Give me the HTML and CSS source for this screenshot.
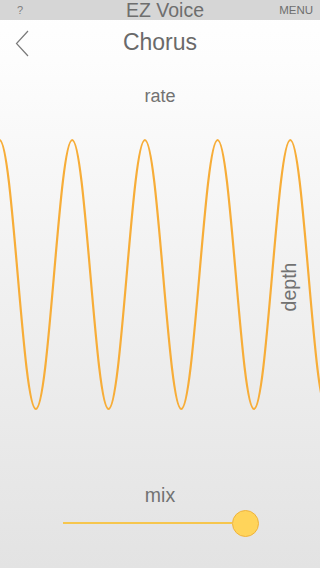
FILE: index.html
```html
<!DOCTYPE html>
<html lang="en">
<head>
<meta charset="utf-8">
<title>EZ Voice - Chorus</title>
<link rel="stylesheet" href="styles.css">
</head>
<body>
<div class="screen">
  <header class="status">
    <span class="help">?</span>
    <span class="app">EZ Voice</span>
    <span class="menu">MENU</span>
  </header>
  <nav class="nav">
    <span class="back">
      <svg width="14" height="27" viewBox="0 0 14 27"><path d="M13 1 L1.5 13.5 L13 26" fill="none" stroke="#7a7a7a" stroke-width="1.2"/></svg>
    </span>
    <h1 class="title">Chorus</h1>
    <span></span>
  </nav>
  <div class="label rate">rate</div>
  <div class="wave">
    <svg class="wave-svg" width="320" height="310" viewBox="0 0 320 310">
      <path fill="none" stroke="#f7ad38" stroke-width="2.2" d="M-0.5,20 c6.58,0 12.25,65.6 18.18,134.5 s11.6,134.5 18.17,134.5 s12.25,-65.6 18.18,-134.5 s11.59,-134.5 18.17,-134.5 s12.25,65.6 18.18,134.5 s11.6,134.5 18.17,134.5 s12.25,-65.6 18.18,-134.5 s11.59,-134.5 18.17,-134.5 s12.25,65.6 18.18,134.5 s11.6,134.5 18.17,134.5 s12.25,-65.6 18.18,-134.5 s11.59,-134.5 18.17,-134.5 s12.25,65.6 18.18,134.5 s11.6,134.5 18.17,134.5 s12.25,-65.6 18.18,-134.5 s11.59,-134.5 18.17,-134.5 s12.25,65.6 18.18,134.5 s11.6,134.5 18.17,134.5"/>
    </svg>
    <div class="depth">depth</div>
  </div>
  <div class="label mix">mix</div>
  <div class="slider">
    <div class="track"></div>
    <div class="thumb"></div>
  </div>
</div>
</body>
</html>
```
FILE: styles.css
```css
* { box-sizing: border-box; }
html, body { margin: 0; padding: 0; }
body {
  font-family: "Liberation Sans", Arial, sans-serif;
  color: #6e6e6e;
}
.screen {
  width: 320px;
  height: 568px;
  overflow: hidden;
  background: linear-gradient(to bottom, #ffffff 0px, #fdfdfd 60px, #f0f0f0 300px, #e3e3e3 568px);
}
.status {
  height: 20px;
  background: #d6d6d6;
  display: grid;
  grid-template-columns: 1fr auto 1fr;
  align-items: center;
  padding: 0 7px 0 17px;
}
.help { font-size: 11px; color: #808080; justify-self: start; }
.app { font-size: 19.5px; line-height: 20px; color: #6e6e6e; }
.menu { font-size: 11.5px; color: #6e6e6e; justify-self: end; }
.nav {
  height: 44px;
  display: grid;
  grid-template-columns: 1fr auto 1fr;
  align-items: center;
}
.back { padding-left: 15px; display: flex; padding-top: 2px; }
.title {
  margin: 0;
  font-weight: normal;
  font-size: 23px;
  line-height: 44px;
  color: #6a6a6a;
}
.label {
  text-align: center;
  line-height: 24px;
  color: #727272;
}
.rate { font-size: 18px; margin-top: 20px; }
.wave {
  position: relative;
  height: 310px;
  margin-top: 12px;
}
.wave-svg { display: block; }
.depth {
  position: absolute;
  left: 289px;
  top: 167px;
  font-size: 19.5px;
  line-height: 20px;
  color: #727272;
  transform: translate(-50%, -50%) rotate(-90deg);
}
.mix { font-size: 19.5px; margin-top: 53px; }
.slider {
  height: 30px;
  margin: 1px 0 0 63px;
  width: 196px;
  display: flex;
  align-items: center;
}
.track {
  flex: 1;
  height: 2px;
  background: #f6c64e;
}
.thumb {
  width: 27px;
  height: 27px;
  border-radius: 50%;
  background: #ffd45a;
  border: 1.5px solid #efb33c;
}
```
